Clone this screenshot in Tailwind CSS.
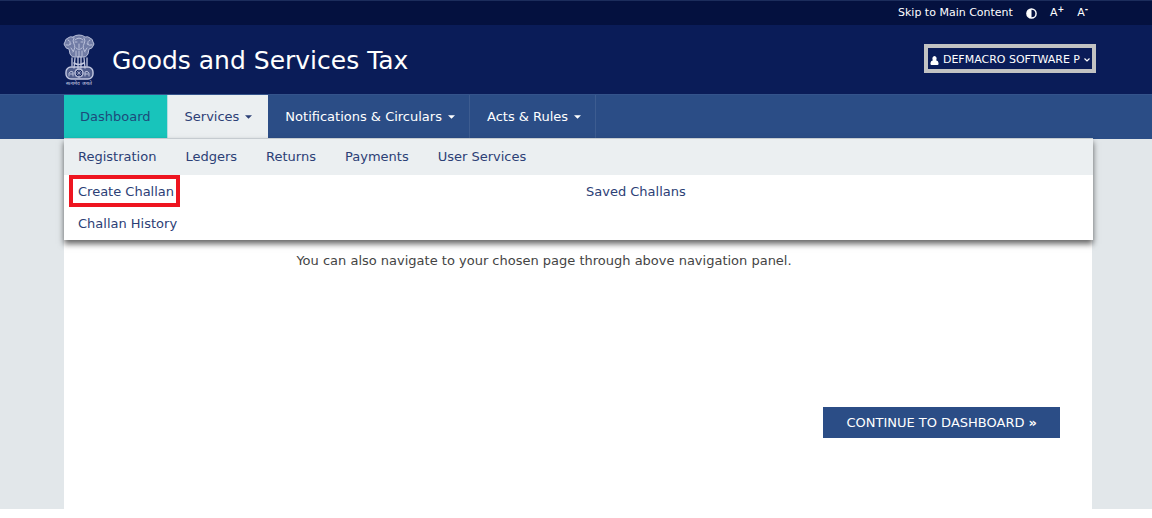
<!DOCTYPE html>
<html lang="en">
<head>
    <meta charset="UTF-8">
    <meta name="viewport" content="width=device-width, initial-scale=1.0">
    <title>Goods and Services Tax</title>
    <script src="https://cdn.jsdelivr.net/npm/@tailwindcss/browser@4"></script>
</head>
<body class="bg-white font-['DejaVu_Sans',sans-serif] text-[13px] leading-5 text-[#2c4076]">
<div class="flex flex-col min-h-screen pb-[9px]">

    <!-- Accessibility bar -->
    <div class="flex items-center justify-end gap-[13px] h-[25px] pr-16 bg-[#04113f] border-t border-[#1c2d5c] text-white text-[11px]">
        <a href="#main">Skip to Main Content</a>
        <button type="button" aria-label="Contrast">
            <svg class="w-[11px] h-[11px]" viewBox="0 0 12 12"><circle cx="6" cy="6" r="5" fill="none" stroke="#fff" stroke-width="1.6"/><path d="M6 1a5 5 0 0 0 0 10z" fill="#fff"/></svg>
        </button>
        <button type="button">A<sup class="text-[8px] font-bold">+</sup></button>
        <button type="button">A<sup class="text-[8px] font-bold">-</sup></button>
    </div>

    <!-- Header -->
    <header class="flex items-center h-[69px] pl-[63px] pr-14 bg-[#0a1c58] text-white">
        <svg class="w-8 h-[52px] shrink-0" viewBox="0 0 32 52" fill="none" stroke="#c3c8e0" stroke-width=".9" stroke-linecap="round">
            <path d="M10 3q2-2 6-2t6 2q3-1 5 1 3 1 3 4 2 2 0 4-1 3-4 3l-1 5q-2 4-5 3h-8q-3 1-5-3l-1-5q-3 0-4-3-2-2 0-4 0-3 3-4 2-2 5-1z" fill="#a9b0cf" fill-opacity=".65"/>
            <path d="M11 4q-2 3 0 6t-1 8M21 4q2 3 0 6t1 8M16 10v4m-3 0q3 3 6 0M12 6q4-4 8 0M12 8h2m4 0h2M13 17v5m3-5v6m3-6v5M5 6q3 1 2 4M27 6q-3 1-2 4M3 11q3 1 5-1M29 11q-3 1-5-1M8 14l2 3m14-3l-2 3"/>
            <path d="M9 24v8m3-8-1 10m4-11v11m3-11v11m3-10 1 10m2-10v8" stroke-width="1.3"/>
            <path d="M11 29q5 3 10 0" stroke-width="1.6"/>
            <rect x="3" y="33" width="27" height="12" rx="5" stroke-width="1.4" fill="#a9b0cf" fill-opacity=".45"/>
            <circle cx="16" cy="39" r="4" stroke-width="1.3" fill="#0a1c58"/>
            <path d="M16 35v8m-4-4h8m-7-3 6 6m0-6-6 6" stroke-width=".6"/>
            <path d="M6 42v-3q2-3 4-1v4m-3-2h3M26 42v-3q-2-3-4-1v4m3-2h-3"/>
            <text x="16" y="51" text-anchor="middle" font-size="5" fill="#d3d7ea" stroke="none">सत्यमेव जयते</text>
        </svg>
        <h1 class="ml-[17px] pt-0.5 text-[25px] leading-8">Goods and Services Tax</h1>
        <button type="button" class="flex items-center gap-1 h-[29px] ml-auto -mt-[3px] px-0.5 pt-1 border-4 border-[#c2c3c3] text-[11px] whitespace-nowrap">
            <svg class="w-[9px] h-[9px]" viewBox="0 0 8 9" fill="#fff"><path d="M4 0a2.2 2.6 0 0 1 1.6 4.3Q8 5 8 7v1q0 1-1 1H1Q0 9 0 8V7q0-2 2.4-2.7A2.2 2.6 0 0 1 4 0z"/></svg>
            DEFMACRO SOFTWARE P
            <svg class="w-1.5 h-1.5" viewBox="0 0 6 6" fill="none" stroke="#fff" stroke-width="1.2"><path d="M.5 1.5 3 4l2.5-2.5"/></svg>
        </button>
    </header>

    <!-- Main navigation -->
    <nav class="relative h-[45px] pl-16 pr-[60px] bg-[#2b4d86] border-t border-[#34538b] text-white">
        <ul class="flex h-[44px] leading-[43px] whitespace-nowrap">
            <li class="bg-[#18c4bb] text-[#1d4b7b]"><a href="#" class="block px-4">Dashboard</a></li>
            <li class="bg-[#ebeff1] text-[#2c4076] border-l border-[#b5dce0]">
                <a href="#" class="flex items-center gap-1.5 pl-[17px] pr-4">Services
                    <svg class="w-[7px] h-1" viewBox="0 0 8 4" fill="currentColor"><path d="M0 0h8L4 4z"/></svg></a>
            </li>
            <li class="border-r border-[#3d5c90]">
                <a href="#" class="flex items-center gap-1.5 pl-[17px] pr-3.5">Notifications &amp; Circulars
                    <svg class="w-[7px] h-1" viewBox="0 0 8 4" fill="currentColor"><path d="M0 0h8L4 4z"/></svg></a>
            </li>
            <li class="border-r border-[#3d5c90]">
                <a href="#" class="flex items-center gap-1.5 pl-[17px] pr-3.5">Acts &amp; Rules
                    <svg class="w-[7px] h-1" viewBox="0 0 8 4" fill="currentColor"><path d="M0 0h8L4 4z"/></svg></a>
            </li>
        </ul>

        <!-- Services dropdown -->
        <div class="absolute left-16 right-[59px] top-[43px] bg-white border-t border-[#c5cbd0] text-[#2c4076] shadow-[0_4px_6px_rgba(0,0,0,0.6)]">
            <ul class="flex gap-[29px] h-9 px-3.5 leading-9 bg-[#ebeff1]">
                <li><a href="#">Registration</a></li>
                <li><a href="#">Ledgers</a></li>
                <li><a href="#">Returns</a></li>
                <li><a href="#">Payments</a></li>
                <li><a href="#">User Services</a></li>
            </ul>
            <ul class="grid grid-cols-2 auto-rows-[32px] content-start h-[65px] pl-[5px] leading-[26px]">
                <li><a href="#" class="inline-block h-8 pl-[5px] pr-0.5 border-4 border-[#ee1520]">Create Challan</a></li>
                <li class="pl-[5px] pt-1"><a href="#">Saved Challans</a></li>
                <li class="pl-[9px] pt-1"><a href="#">Challan History</a></li>
            </ul>
        </div>
    </nav>

    <main id="main" class="flex grow pl-16 pr-[60px] bg-[#e2e7ea]">
        <div class="flex flex-col grow bg-white pt-[112px]">
            <p class="pr-[68px] text-center text-[#444]">You can also navigate to your chosen page through above navigation panel.</p>
            <button type="button" class="self-end mt-[136px] mr-8 h-[31px] px-[23px] bg-[#2b4d86] text-white">CONTINUE TO DASHBOARD <b>»</b></button>
        </div>
    </main>
</div>
</body>
</html>
